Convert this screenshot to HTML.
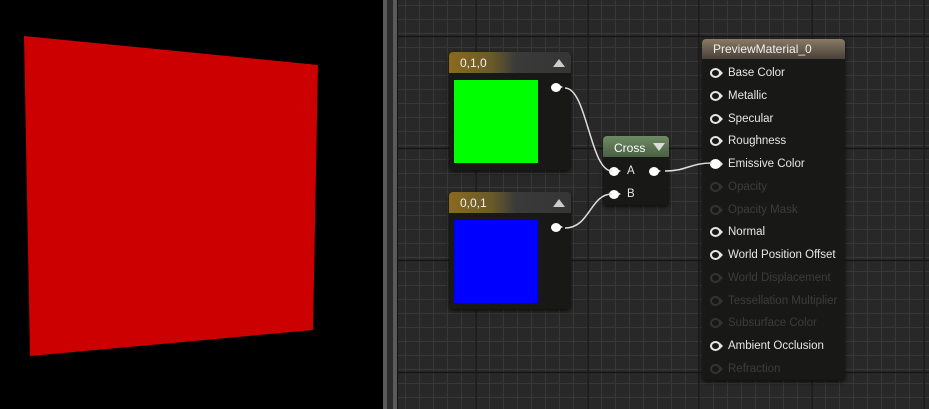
<!DOCTYPE html>
<html><head><style>
body{margin:0;width:929px;height:409px;overflow:hidden;background:#000;font-family:"Liberation Sans",sans-serif;position:relative}
.a{position:absolute}
.node{position:absolute;background:#181917;border-radius:4px;box-shadow:0 2px 4px rgba(0,0,0,.7)}
.hd{position:absolute;left:0;right:0;top:0;border-radius:4px 4px 0 0;color:#f0f0f0;font-size:12px;padding-left:11px;box-sizing:border-box}
.tri{position:absolute;width:0;height:0;border-left:6px solid transparent;border-right:6px solid transparent}
.pin{position:absolute;width:10px;height:9px;border-radius:50%;background:#fff}
.pin:after{content:"";position:absolute;left:8px;top:2px;border-left:4px solid #fff;border-top:2.5px solid transparent;border-bottom:2.5px solid transparent}
.row{position:absolute;left:0;font-size:11.5px;color:#e6e6e6;height:14px;line-height:14px}
.row .p{position:absolute;left:8px;top:2px;width:7px;height:6px;border:2px solid #e6e6e6;border-radius:50%;display:block}
.row .p:after{content:"";position:absolute;left:8px;top:0px;border-left:3px solid #e6e6e6;border-top:3px solid transparent;border-bottom:3px solid transparent}
.row span{position:absolute;left:26px;white-space:nowrap}
.row.d{color:#3c3c3c}.row.d .p{border-color:#333}.row.d .p:after{border-left-color:#333}
.row.f .p{background:#fff;border-color:#fff}
</style></head><body>
<svg class="a" style="left:0;top:0" width="383" height="409"><polygon points="24,36 318,65 313,330 30,356" fill="#cc0000"/></svg>
<div class="a" style="left:383px;top:0;width:4px;height:409px;background:#5a5a5a"></div>
<div class="a" style="left:387px;top:0;width:6px;height:409px;background:#2c2c2c"></div>
<div class="a" style="left:393px;top:0;width:4px;height:409px;background:#5a5a5a"></div>
<svg class="a" style="left:397px;top:0" width="532" height="409">
<defs><pattern id="g" x="-5" y="-8" width="14" height="14" patternUnits="userSpaceOnUse"><path d="M13.5 0V14M0 13.5H14" stroke="#383838" stroke-width="1"/></pattern></defs>
<rect width="532" height="409" fill="#282828"/>
<rect width="532" height="409" fill="url(#g)"/>
<g stroke="#141414" stroke-width="1.2">
<path d="M0.5 0V409M79 0V409M191 0V409M302 0V409M415 0V409M527 0V409"/>
<path d="M0 36.5H532M0 148.5H532M0 260.5H532M0 372.5H532"/>
</g>
</svg>
<svg class="a" style="left:0;top:0;z-index:2" width="929" height="409" fill="none" stroke="#ddd" stroke-width="1.5">
<path d="M565 88C587 88 590 171 612 171"/>
<path d="M565 228C590 228 590 194 612 194"/>
<path d="M665 171C687 171 690 163 712 163"/>
</svg>
<div class="node" style="left:449px;top:52px;width:122px;height:118px">
<div class="hd" style="height:21px;line-height:23px;background:linear-gradient(90deg,#8a6a1e 0,#6a5a2a 35%,#3a3a3a 55%,#353535)">0,1,0</div>
<div class="tri" style="left:104px;top:7px;border-bottom:8px solid #ccc"></div>
<div class="a" style="left:5px;top:28px;width:84px;height:83px;background:#00ff00"></div>
<div class="pin" style="left:102px;top:31px"></div>
</div>
<div class="node" style="left:449px;top:192px;width:122px;height:117px">
<div class="hd" style="height:21px;line-height:23px;background:linear-gradient(90deg,#8a6a1e 0,#6a5a2a 35%,#3a3a3a 55%,#353535)">0,0,1</div>
<div class="tri" style="left:104px;top:7px;border-bottom:8px solid #ccc"></div>
<div class="a" style="left:5px;top:28px;width:84px;height:83px;background:#0000ff"></div>
<div class="pin" style="left:102px;top:31px"></div>
</div>
<div class="node" style="left:603px;top:136px;width:66px;height:69px">
<div class="hd" style="height:21px;line-height:24px;background:linear-gradient(180deg,#6f8a64,#4a6044);color:#fff">Cross</div>
<div class="tri" style="left:50px;top:7px;border-top:8px solid #ddd"></div>
<div class="pin" style="left:6px;top:31px"></div><div class="a" style="left:24px;top:29px;color:#e6e6e6;font-size:11.5px">A</div>
<div class="pin" style="left:6px;top:54px"></div><div class="a" style="left:24px;top:52px;color:#e6e6e6;font-size:11.5px">B</div>
<div class="pin" style="left:46px;top:31px"></div>
</div>
<div class="node" style="left:702px;top:39px;width:143px;height:341px">
<div class="hd" style="height:20px;line-height:20px;background:linear-gradient(180deg,#8a7a66,#4a4038);font-size:12px">PreviewMaterial_0</div>
<div class="row" style="top:27px"><i class="p"></i><span>Base Color</span></div>
<div class="row" style="top:50px"><i class="p"></i><span>Metallic</span></div>
<div class="row" style="top:73px"><i class="p"></i><span>Specular</span></div>
<div class="row" style="top:95px"><i class="p"></i><span>Roughness</span></div>
<div class="row f" style="top:118px"><i class="p"></i><span>Emissive Color</span></div>
<div class="row d" style="top:141px"><i class="p"></i><span>Opacity</span></div>
<div class="row d" style="top:164px"><i class="p"></i><span>Opacity Mask</span></div>
<div class="row" style="top:186px"><i class="p"></i><span>Normal</span></div>
<div class="row" style="top:209px"><i class="p"></i><span>World Position Offset</span></div>
<div class="row d" style="top:232px"><i class="p"></i><span>World Displacement</span></div>
<div class="row d" style="top:255px"><i class="p"></i><span>Tessellation Multiplier</span></div>
<div class="row d" style="top:277px"><i class="p"></i><span>Subsurface Color</span></div>
<div class="row" style="top:300px"><i class="p"></i><span>Ambient Occlusion</span></div>
<div class="row d" style="top:323px"><i class="p"></i><span>Refraction</span></div>
</div>
</body></html>
